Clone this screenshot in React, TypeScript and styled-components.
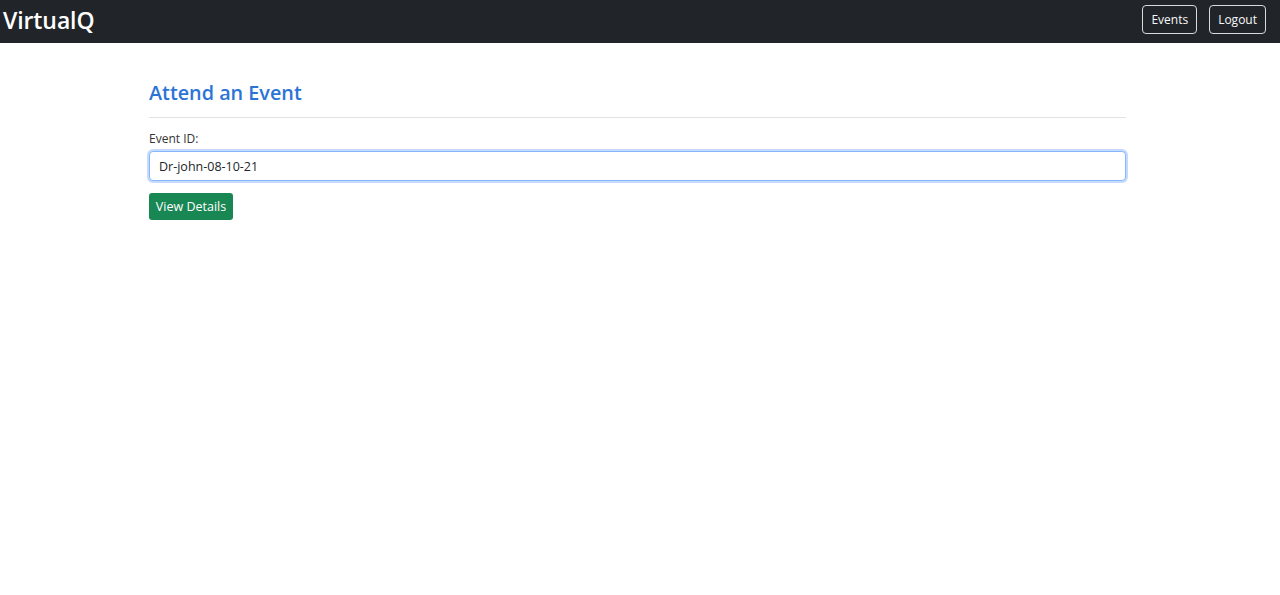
import React from "react";
import styled, { createGlobalStyle } from "styled-components";

const Global = createGlobalStyle`
  html, body { margin: 0; padding: 0; background: #fff; }
  body { font-family: "Open Sans", "Noto Sans", sans-serif; color: #212529; }
  * { box-sizing: border-box; }
`;

const Nav = styled.nav`
  height: 43px;
  background: #212529;
  display: flex;
  align-items: center;
  justify-content: space-between;
  padding: 0 14px 0 3px;
`;

const Brand = styled.div`
  color: #fff;
  font-size: 23px;
  font-weight: 600;
  letter-spacing: -0.1px;
  margin-top: -3px;
`;

const NavActions = styled.div`
  display: flex;
  gap: 12px;
  margin-top: -5px;
`;

const NavButton = styled.button`
  height: 29px;
  padding: 0 8px;
  background: transparent;
  color: #f8f9fa;
  border: 1px solid #d8dadc;
  border-radius: 4px;
  font-family: inherit;
  font-size: 12px;
`;

const Main = styled.main`
  width: 977px;
  margin-left: 149px;
  padding-top: 35px;
  display: flex;
  flex-direction: column;
`;

const Title = styled.h2`
  margin: 0;
  font-size: 19.8px;
  font-weight: 600;
  color: #2b74d6;
  line-height: 30px;
`;

const Rule = styled.hr`
  margin: 9px 0 0;
  border: 0;
  border-top: 1px solid #dfe1e3;
`;

const Label = styled.label`
  margin-top: 12px;
  font-size: 12px;
  color: #333;
  line-height: 18px;
`;

const Input = styled.input`
  margin-top: 3px;
  height: 30px;
  width: 100%;
  border: 1px solid #86b7fe;
  border-radius: 4px;
  box-shadow: 0 0 0 2px #c6dbfb;
  padding: 0 9px;
  font-family: inherit;
  font-size: 12.5px;
  color: #212529;
  outline: none;
`;

const Submit = styled.button`
  margin-top: 12px;
  align-self: flex-start;
  height: 27px;
  width: 84px;
  background: #198754;
  border: 0;
  border-radius: 3px;
  color: #fff;
  font-family: inherit;
  font-size: 12.5px;
`;

export default function App() {
  return (
    <>
      <Global />
      <Nav>
        <Brand>VirtualQ</Brand>
        <NavActions>
          <NavButton>Events</NavButton>
          <NavButton>Logout</NavButton>
        </NavActions>
      </Nav>
      <Main>
        <Title>Attend an Event</Title>
        <Rule />
        <Label>Event ID:</Label>
        <Input defaultValue="Dr-john-08-10-21" />
        <Submit>View Details</Submit>
      </Main>
    </>
  );
}
